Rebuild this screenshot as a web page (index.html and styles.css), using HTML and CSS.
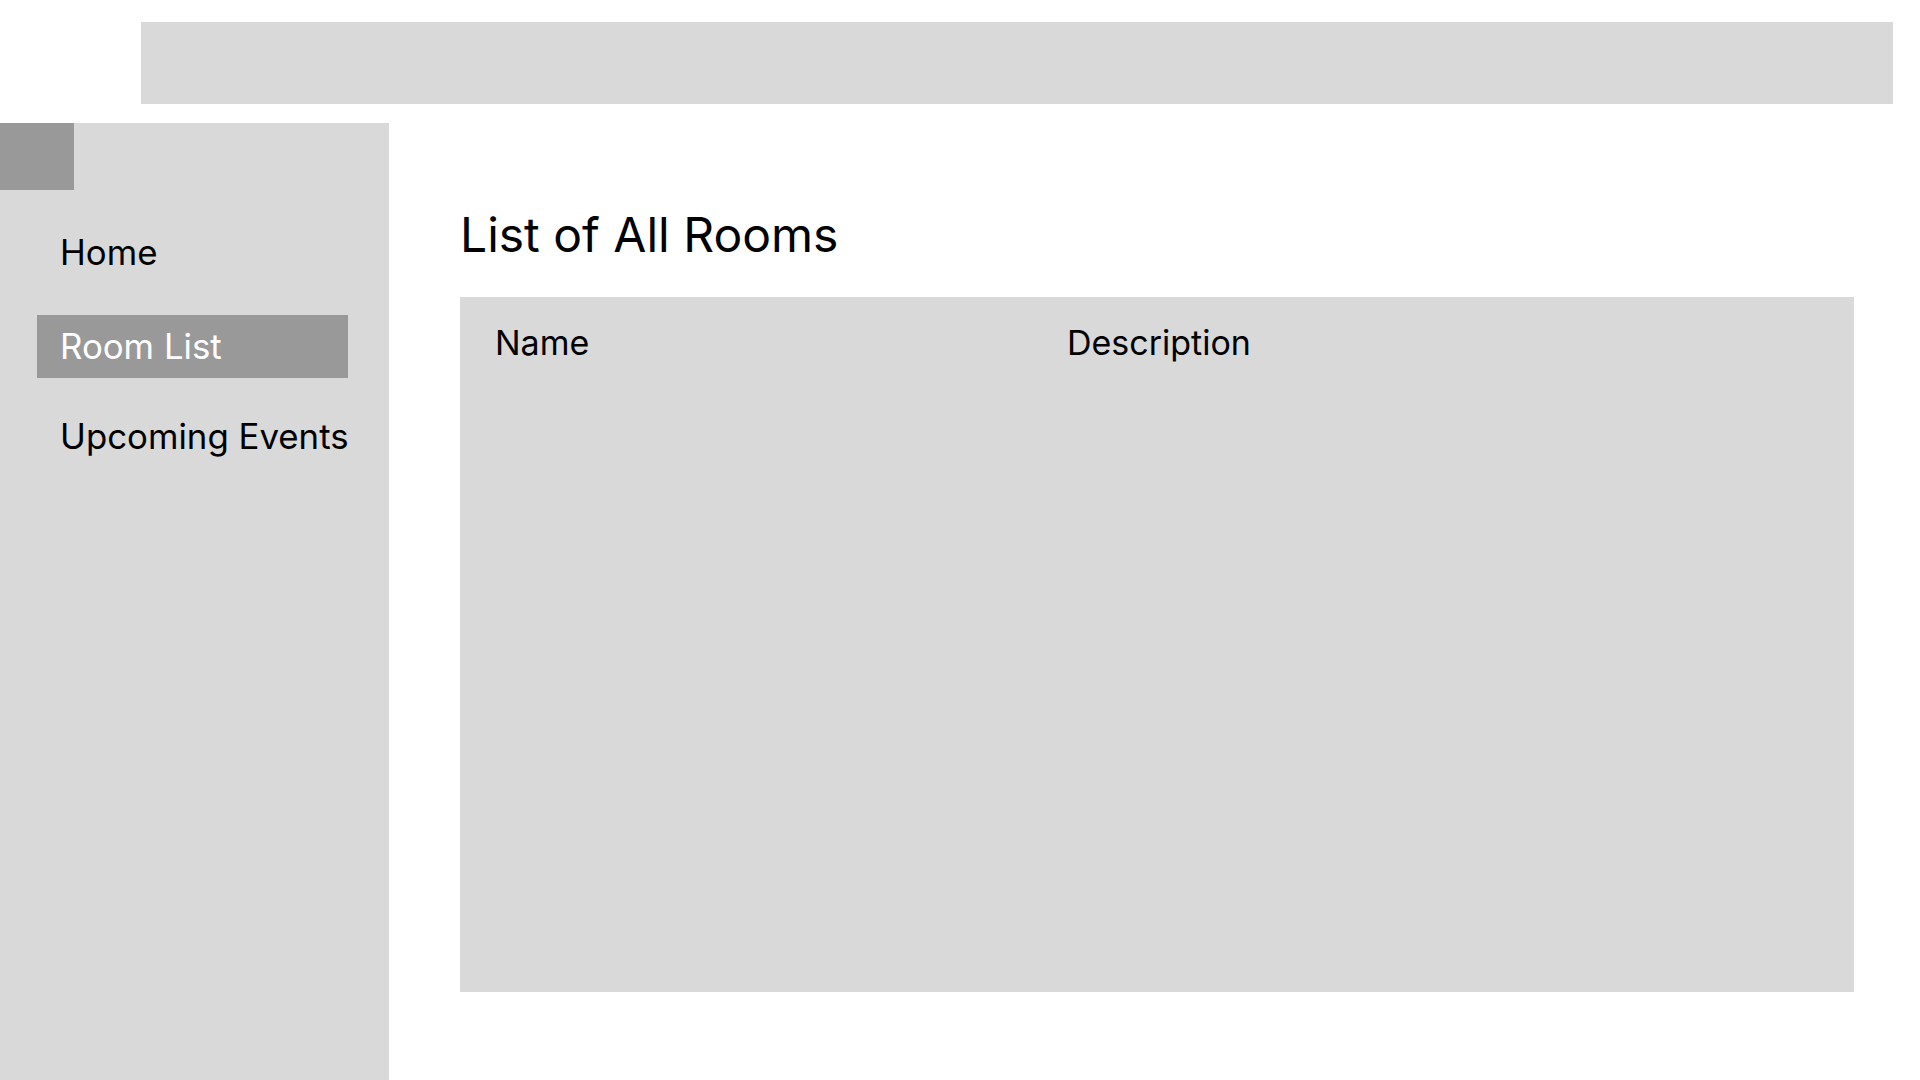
FILE: index.html
```html
<!DOCTYPE html>
<html lang="en">
<head>
<meta charset="utf-8">
<title>Room List</title>
<link rel="stylesheet" href="styles.css">
</head>
<body>
<header class="topbar"></header>
<div class="layout">
  <aside class="sidebar">
    <div class="logo"></div>
    <nav class="nav">
      <a class="nav-item nav-home">Home</a>
      <a class="nav-item nav-rooms active">Room List</a>
      <a class="nav-item nav-events">Upcoming Events</a>
    </nav>
  </aside>
  <main class="content">
    <h1 class="title">List of All Rooms</h1>
    <div class="table">
      <div class="table-head">
        <span class="col col-name">Name</span>
        <span class="col col-desc">Description</span>
      </div>
    </div>
  </main>
</div>
</body>
</html>
```

FILE: styles.css
```css
* { box-sizing: border-box; }
html, body { margin: 0; padding: 0; background: #fff; }
body {
  font-family: Inter, "Noto Sans", sans-serif;
  color: #000;
  width: 1920px;
  height: 1080px;
  overflow: hidden;
}
.topbar {
  margin: 22px 0 0 141px;
  width: 1752px;
  height: 82px;
  background: #d9d9d9;
}
.layout {
  display: flex;
  margin-top: 19px;
  height: 957px;
}
.sidebar {
  width: 389px;
  flex: none;
  background: #d9d9d9;
}
.logo {
  width: 74px;
  height: 67px;
  background: #999;
}
.nav {
  display: flex;
  flex-direction: column;
  padding: 31px 0 0 37px;
}
.nav-item {
  display: block;
  width: 311px;
  height: 63px;
  padding-left: 23px;
  font-size: 34.8px;
  line-height: 63px;
  white-space: nowrap;
  color: #000;
}
.nav-rooms { margin-top: 31px; }
.nav-events { margin-top: 27px; }
.nav-item.active {
  background: #999;
  color: #fff;
}
.content {
  flex: 1;
  padding-left: 71px;
}
.title {
  margin: 0;
  padding-top: 84px;
  font-size: 48px;
  font-weight: 400;
  line-height: 56px;
  height: 174px;
}
.table {
  width: 1394px;
  height: 695px;
  background: #d9d9d9;
}
.table-head {
  display: flex;
  padding: 26px 0 0 35px;
  font-size: 34px;
  line-height: 40px;
}
.col-name { width: 572px; }
```
